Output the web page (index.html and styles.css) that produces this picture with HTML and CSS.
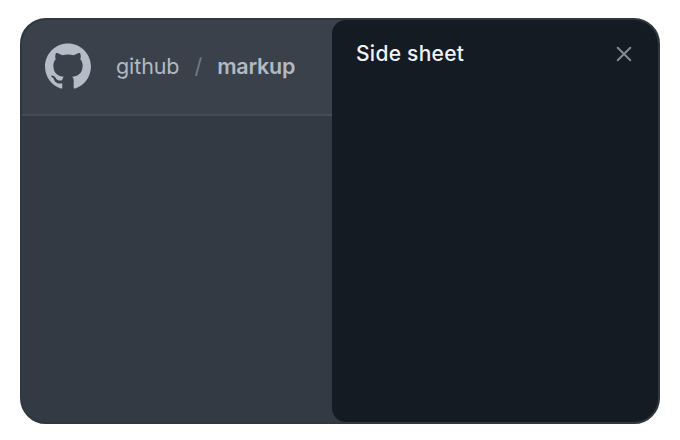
FILE: index.html
```html
<!DOCTYPE html>
<html lang="en">
<head>
<meta charset="utf-8">
<title>Side sheet</title>
<link rel="stylesheet" href="styles.css">
</head>
<body>
<main class="window">
  <section class="page">
    <header class="topbar">
      <svg class="logo" viewBox="0 0 97.707 96" aria-hidden="true"><path d="M48.854 0C21.839 0 0 22 0 49.217c0 21.756 13.993 40.172 33.405 46.69 2.427.49 3.316-1.059 3.316-2.362 0-1.141-.08-5.052-.08-9.127-13.59 2.934-16.42-5.867-16.42-5.867-2.184-5.704-5.42-7.17-5.42-7.17-4.448-3.015.324-3.015.324-3.015 4.934.326 7.523 5.052 7.523 5.052 4.367 7.496 11.404 5.378 14.235 4.074.404-3.178 1.699-5.378 3.074-6.6-10.839-1.141-22.243-5.378-22.243-24.283 0-5.378 1.94-9.778 5.014-13.2-.485-1.222-2.184-6.275.486-13.038 0 0 4.125-1.304 13.426 5.052a46.97 46.97 0 0 1 12.214-1.63c4.125 0 8.33.571 12.213 1.63 9.302-6.356 13.427-5.052 13.427-5.052 2.67 6.763.97 11.816.485 13.038 3.155 3.422 5.015 7.822 5.015 13.2 0 18.905-11.404 23.06-22.324 24.283 1.78 1.548 3.316 4.481 3.316 9.126 0 6.6-.08 11.897-.08 13.526 0 1.304.89 2.853 3.316 2.364 19.412-6.52 33.405-24.935 33.405-46.691C97.707 22 75.788 0 48.854 0z"/></svg>
      <nav class="crumbs">
        <span class="owner">github</span>
        <span class="slash">/</span>
        <span class="repo">markup</span>
      </nav>
    </header>
  </section>
  <aside class="sheet">
    <h2 class="title">Side sheet</h2>
    <svg class="close" viewBox="0 0 16 16" aria-hidden="true"><path d="M1.7 1.7 14.3 14.3M14.3 1.7 1.7 14.3"/></svg>
  </aside>
</main>
</body>
</html>
```
FILE: styles.css
```css
* {
  box-sizing: border-box;
}

body {
  margin: 0;
  padding: 18px 20px;
  background: #fff;
  font-family: Inter, "Liberation Sans", sans-serif;
}

.window {
  display: flex;
  width: 640px;
  height: 406px;
  overflow: hidden;
  border: 2px solid #30373f;
  border-radius: 26px;
  background: linear-gradient(#3a414b 94px, #454c56 94px, #454c56 96px, #333a44 96px);
}

.page {
  width: 310px;
}

.topbar {
  display: flex;
  align-items: center;
  gap: 25px;
  height: 94px;
  padding: 0 0 2px 23px;
}

.logo {
  width: 46px;
  height: 46px;
  fill: #b4bcc8;
}

.crumbs {
  display: flex;
  align-items: center;
  color: #b1b9c3;
  font-size: 21.5px;
  line-height: 28px;
}

.owner {
  letter-spacing: -0.1px;
}

.slash {
  margin: 0 15px;
  color: #737b87;
}

.repo {
  font-weight: 600;
  letter-spacing: -0.25px;
}

.sheet {
  display: flex;
  flex: 1;
  align-items: flex-start;
  justify-content: space-between;
  padding: 20px 26px 0 24px;
  border-radius: 14px 0 0 14px;
  background: #151b23;
}

.title {
  margin: 0;
  color: #eef4fb;
  font-size: 21px;
  font-weight: 500;
  line-height: 28px;
  letter-spacing: 0.27px;
}

.close {
  width: 16px;
  height: 16px;
  margin-top: 6px;
  fill: none;
  stroke: #818994;
  stroke-width: 2;
  stroke-linecap: round;
}
```
